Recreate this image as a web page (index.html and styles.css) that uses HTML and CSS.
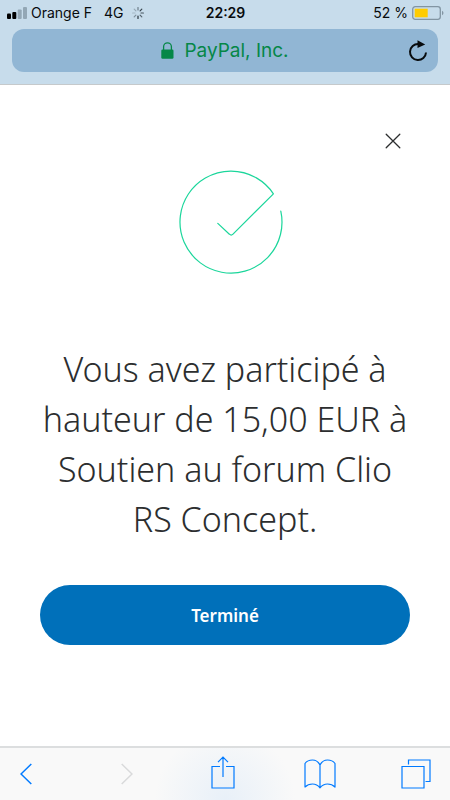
FILE: index.html
```html
<!DOCTYPE html>
<html lang="fr">
<head>
<meta charset="utf-8">
<meta name="viewport" content="width=device-width, initial-scale=1">
<title>PayPal, Inc.</title>
<link rel="stylesheet" href="styles.css">
</head>
<body>
<header class="browser">
  <div class="status">
    <div class="network">
      <svg class="signal" width="20" height="12" viewBox="0 0 20 12" aria-hidden="true">
        <rect x="0" y="6.5" width="4" height="5.5" rx="1"/>
        <rect x="5.3" y="5" width="4" height="7" rx="1"/>
        <rect class="off" x="10.7" y="2.5" width="4" height="9.5" rx="1"/>
        <rect class="off" x="16" y="0" width="4" height="12" rx="1"/>
      </svg>
      <span>Orange F</span>
      <span class="technology">4G</span>
      <svg width="12" height="12" viewBox="-6 -6 12 12" stroke="#26323b" stroke-width="1.2" stroke-linecap="round" aria-hidden="true">
        <path d="M0-3V-5.4" opacity=".55"/>
        <path d="M2.1-2.1 3.8-3.8" opacity=".9"/>
        <path d="M3 0H5.4" opacity=".8"/>
        <path d="M2.1 2.1 3.8 3.8" opacity=".7"/>
        <path d="M0 3V5.4"/>
        <path d="M-2.1 2.1-3.8 3.8" opacity=".45"/>
        <path d="M-3 0H-5.4" opacity=".2"/>
        <path d="M-2.1-2.1-3.8-3.8" opacity=".3"/>
      </svg>
    </div>
    <time class="clock">22:29</time>
    <div class="power">
      <span>52 %</span>
      <svg width="32" height="14" viewBox="0 0 32 14" aria-hidden="true">
        <rect x=".7" y=".7" width="27.6" height="12.6" rx="2.5" fill="none" stroke="#8295a3" stroke-width="1.3"/>
        <rect x="2.7" y="2.7" width="13" height="8.6" fill="#fc0"/>
        <path d="M30 4.8Q31.5 5.5 31.5 7T30 9.2Z" fill="#8295a3"/>
      </svg>
    </div>
  </div>
  <div class="address">
    <a class="site" href="#">
      <svg width="13" height="17" viewBox="0 0 13 17" aria-hidden="true">
        <path d="M2.6 8V4.7a3.9 3.9 0 0 1 7.8 0V8" fill="none" stroke="#058747" stroke-width="1.3"/>
        <rect x=".3" y="7.5" width="12.2" height="9.2" rx="1.3" fill="#058747"/>
      </svg>
      <span>PayPal, Inc.</span>
    </a>
    <button class="icon-button reload" type="button" aria-label="Actualiser">
      <svg width="20" height="22" viewBox="0 0 20 22" aria-hidden="true">
        <path d="M10.5 4.1A8 8 0 1 0 18 12.5" fill="none" stroke="#080b0d" stroke-width="2"/>
        <path d="M9.5 .2 17.2 4.4 9.5 8Z" fill="#080b0d"/>
      </svg>
    </button>
  </div>
</header>
<main class="content">
  <button class="icon-button close" type="button" aria-label="Fermer">
    <svg width="16" height="16" viewBox="0 0 16 16" fill="none" stroke="#2c2e2f" stroke-width="1.3" stroke-linecap="round" aria-hidden="true">
      <path d="M1.2 1.2 14.8 14.8M14.8 1.2 1.2 14.8"/>
    </svg>
  </button>
  <svg class="success" width="104" height="104" viewBox="-52 -52 104 104" fill="none" stroke="#1bd69b" stroke-width="1.2" stroke-linecap="round" stroke-linejoin="round" aria-hidden="true">
    <path d="M49.8-10.8A51 51 0 1 1 42.4-28.2L2 12.2Q.2 14 -1.6 12.2L-13.2 1.4"/>
  </svg>
  <h1 class="message">Vous avez participé à hauteur de 15,00 EUR à Soutien au forum Clio RS Concept.</h1>
  <button class="done" type="button">Terminé</button>
</main>
<nav class="toolbar" aria-label="Navigation">
  <button class="icon-button" type="button" aria-label="Page précédente">
    <svg width="20" height="22" viewBox="0 0 20 22" fill="none" stroke="#007aff" stroke-width="1.5" aria-hidden="true"><path d="M11.3 1 1 11 11.3 21"/></svg>
  </button>
  <button class="icon-button" type="button" aria-label="Page suivante" disabled>
    <svg width="12" height="22" viewBox="0 0 12 22" fill="none" stroke="#d9dadb" stroke-width="1.5" aria-hidden="true"><path d="M.7 1 11 11 .7 21"/></svg>
  </button>
  <button class="icon-button share" type="button" aria-label="Partager">
    <svg width="24" height="33" viewBox="0 0 24 33" fill="none" stroke="#007aff" stroke-width="1.2" aria-hidden="true"><path d="M9 10.5H1V32H23V10.5H15M12 21V1.2M7 6.2 12 1.2 17 6.2"/></svg>
  </button>
  <button class="icon-button" type="button" aria-label="Signets">
    <svg width="32" height="30" viewBox="0 0 32 30" fill="none" stroke="#007aff" stroke-width="1.2" stroke-linejoin="round" aria-hidden="true"><path d="M16 6Q13.5 1 8.5 1T1 4.5V28Q4 25 8.5 25T16 28.8Q19 25 23.5 25T31 28V4.5Q28.5 1 23.5 1T16 6V28.8"/></svg>
  </button>
  <button class="icon-button" type="button" aria-label="Onglets">
    <svg width="30" height="30" viewBox="0 0 30 30" fill="none" stroke="#007aff" stroke-width="1.2" aria-hidden="true"><path d="M1 7.5H23V29H1ZM7.5 5.5V1H29V22.5H24.5"/></svg>
  </button>
</nav>
</body>
</html>
```

FILE: styles.css
```css
* {
  box-sizing: border-box;
}

body {
  display: flex;
  flex-direction: column;
  min-height: 100vh;
  margin: 0;
  background: #fff;
  color: #2c2e2f;
  font-family: Inter, "Liberation Sans", sans-serif;
}

svg {
  display: block;
  flex: none;
}

.icon-button {
  display: flex;
  align-items: center;
  justify-content: center;
  padding: 0;
  border: 0;
  background: none;
  cursor: pointer;
}

.browser {
  padding: 0 12px 12px;
  border-bottom: 1px solid #c5c9cb;
  background: #c7dceb;
}

.status {
  display: grid;
  grid-template-columns: 1fr auto 1fr;
  align-items: center;
  height: 25px;
  margin: 0 -6px 4px -5px;
  color: #080b0d;
  font-size: 14px;
  line-height: 20px;
  white-space: nowrap;
}

.network,
.power {
  display: flex;
  align-items: center;
  gap: 4px;
}

.network .technology {
  margin: 0 4px 0 8px;
}

.signal .off {
  fill: #93a7b5;
}

.clock {
  font-weight: 600;
}

.power {
  justify-content: flex-end;
}

.address {
  display: grid;
  grid-template-columns: 1fr auto 1fr;
  align-items: center;
  height: 43px;
  padding: 0 10px;
  border-radius: 12px;
  background: #91b6d4;
}

.site {
  display: flex;
  grid-column: 2;
  align-items: center;
  gap: 10px;
  color: #058747;
  font-size: 19px;
  line-height: 24px;
  text-decoration: none;
}

.reload {
  justify-self: end;
}

.content {
  display: flex;
  flex: 1;
  flex-direction: column;
  align-items: center;
  padding: 48px 40px 40px;
}

.close {
  align-self: flex-end;
  margin-right: 9px;
}

.success {
  margin: 21px 0 70px 12px;
}

.message {
  margin: 0 0 41px;
  font-family: "Noto Sans", "Open Sans", sans-serif;
  font-size: 34px;
  font-weight: 300;
  line-height: 50px;
  text-align: center;
}

.done {
  width: 100%;
  height: 60px;
  border: 0;
  border-radius: 30px;
  background: #0070ba;
  color: #fff;
  font-family: "Noto Sans", sans-serif;
  font-size: 17px;
  font-weight: 600;
  cursor: pointer;
}

.toolbar {
  display: flex;
  align-items: center;
  justify-content: space-between;
  height: 54px;
  padding: 0 18px 0 14px;
  border-top: 2px solid #dcdedf;
  background: radial-gradient(circle at 50% 100%, #e8f0f8, #f9f9f9 70px);
}

.toolbar .icon-button {
  width: 32px;
}

.toolbar .share {
  padding-bottom: 4px;
}
```
